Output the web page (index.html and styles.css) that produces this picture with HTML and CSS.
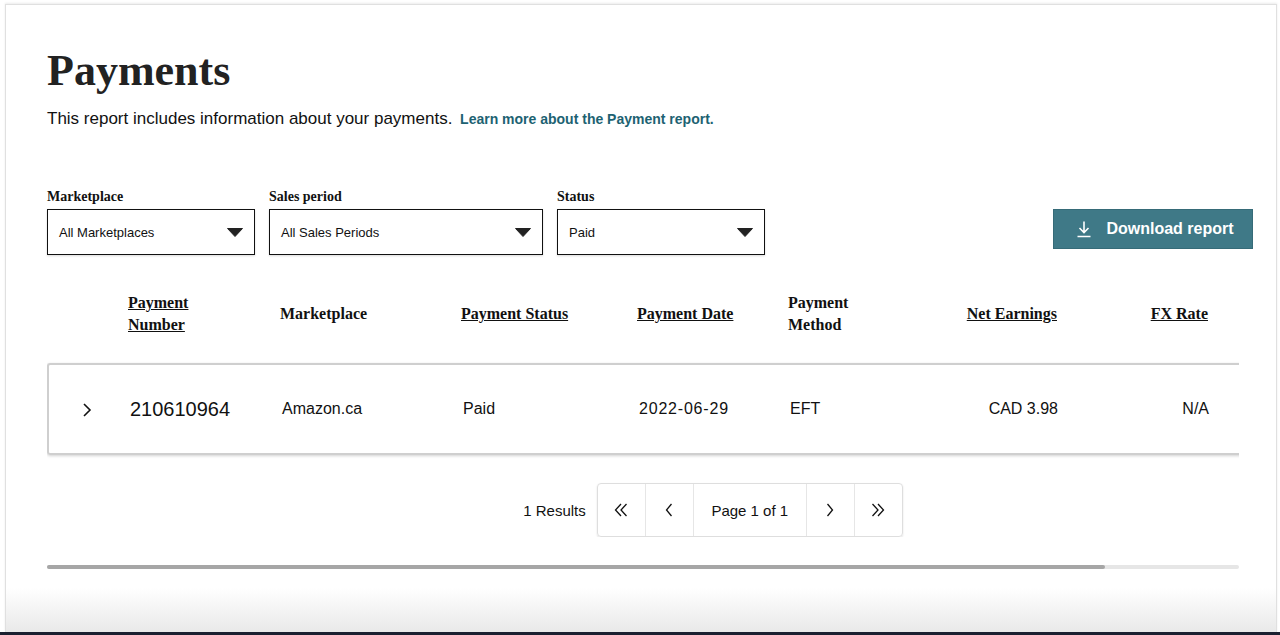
FILE: index.html
```html
<!DOCTYPE html>
<html lang="en">
<head>
    <meta charset="UTF-8">
    <meta name="viewport" content="width=device-width, initial-scale=1.0">
    <title>Payments</title>
    <link rel="stylesheet" href="styles.css">
</head>
<body>

    <div class="page">
        <h1>Payments</h1>
        <p class="intro">This report includes information about your payments. <a href="#" class="learn-link">Learn more about the Payment report.</a></p>

        <!-- Filters -->
        <div class="filter-row">
            <div class="filter">
                <label>Marketplace</label>
                <div class="select select-small">
                    <span>All Marketplaces</span>
                    <svg class="caret" width="16" height="9" viewBox="0 0 16 9"><polygon points="0.5,0.5 15.5,0.5 8,8.5" fill="#222" stroke="#222" stroke-linejoin="round"/></svg>
                </div>
            </div>
            <div class="filter">
                <label>Sales period</label>
                <div class="select select-wide">
                    <span>All Sales Periods</span>
                    <svg class="caret" width="16" height="9" viewBox="0 0 16 9"><polygon points="0.5,0.5 15.5,0.5 8,8.5" fill="#222" stroke="#222" stroke-linejoin="round"/></svg>
                </div>
            </div>
            <div class="filter">
                <label>Status</label>
                <div class="select select-small">
                    <span>Paid</span>
                    <svg class="caret" width="16" height="9" viewBox="0 0 16 9"><polygon points="0.5,0.5 15.5,0.5 8,8.5" fill="#222" stroke="#222" stroke-linejoin="round"/></svg>
                </div>
            </div>
            <button class="download-btn">
                <svg width="16" height="18" viewBox="0 0 16 18"><path d="M8 1.5v11 M3.5 8l4.5 4.5 4.5-4.5 M1.5 16.5h13" fill="none" stroke="#fff" stroke-width="1.6"/></svg>
                Download report
            </button>
        </div>

        <!-- Payments table -->
        <div class="table-scroll">
            <div class="table-inner">
                <div class="grid head-row">
                    <div></div>
                    <div><a href="#" class="sort narrow">Payment Number</a></div>
                    <div>Marketplace</div>
                    <div><a href="#" class="sort">Payment Status</a></div>
                    <div><a href="#" class="sort">Payment Date</a></div>
                    <div><span class="narrow">Payment Method</span></div>
                    <div class="num"><a href="#" class="sort">Net Earnings</a></div>
                    <div class="num"><a href="#" class="sort">FX Rate</a></div>
                    <div></div>
                </div>

                <div class="grid data-row">
                    <div class="expand">
                        <svg width="10" height="16" viewBox="0 0 10 16"><path d="M2 2l6 6-6 6" fill="none" stroke="#111" stroke-width="1.6"/></svg>
                    </div>
                    <div class="pay-number">210610964</div>
                    <div>Amazon.ca</div>
                    <div>Paid</div>
                    <div class="date">2022-06-29</div>
                    <div>EFT</div>
                    <div class="num">CAD 3.98</div>
                    <div class="num">N/A</div>
                    <div></div>
                </div>

                <div class="pager-row">
                    <span class="results">1 Results</span>
                    <div class="pager">
                        <div class="pager-cell pager-icon">
                            <svg width="14" height="14" viewBox="0 0 14 14"><path d="M7 1L1.5 7 7 13 M12.5 1L7 7l5.5 6" fill="none" stroke="#111" stroke-width="1.3"/></svg>
                        </div>
                        <div class="pager-cell pager-icon">
                            <svg width="8" height="14" viewBox="0 0 8 14"><path d="M6.5 1L1.5 7l5 6" fill="none" stroke="#111" stroke-width="1.3"/></svg>
                        </div>
                        <div class="pager-cell pager-label">Page 1 of 1</div>
                        <div class="pager-cell pager-icon">
                            <svg width="8" height="14" viewBox="0 0 8 14"><path d="M1.5 1l5 6-5 6" fill="none" stroke="#111" stroke-width="1.3"/></svg>
                        </div>
                        <div class="pager-cell pager-icon">
                            <svg width="14" height="14" viewBox="0 0 14 14"><path d="M1.5 1L7 7l-5.5 6 M7 1l5.5 6L7 13" fill="none" stroke="#111" stroke-width="1.3"/></svg>
                        </div>
                    </div>
                </div>
            </div>
        </div>

        <div class="scrollbar">
            <div class="scrollbar-thumb" style="width: 88.8%"></div>
        </div>
    </div>
    <div class="footer-bar"></div>

</body>
</html>
```

FILE: styles.css
```css
body {
    font-family: "Liberation Sans", Arial, sans-serif;
    color: #111;
    background-color: #fff;
    margin: 0;
    height: 635px;
    overflow: hidden;
}
.page {
    height: 628px;
    margin: 4px 3px 0 5px;
    padding: 40px 24px 0 41px;
    box-sizing: border-box;
    border: 1px solid #e0e0e0;
    border-bottom: none;
    box-shadow: 0 -1px 2px rgba(0, 0, 0, 0.08);
    background: linear-gradient(to bottom, #fff 0%, #fff 93%, #e9e9e9 100%);
}
h1 {
    font-family: "Liberation Serif", "Times New Roman", serif;
    font-size: 44px;
    line-height: 52px;
    font-weight: bold;
    color: #222;
    margin: 0;
}
.intro {
    font-size: 17px;
    line-height: 20px;
    margin: 12px 0 0 0;
}
.learn-link {
    font-size: 14px;
    font-weight: bold;
    color: #1d6272;
    text-decoration: none;
    margin-left: 3px;
}

/* filters */
.filter-row {
    display: flex;
    align-items: flex-end;
    gap: 14px;
    margin-top: 59px;
}
.filter label {
    display: block;
    font-family: "Liberation Serif", "Times New Roman", serif;
    font-size: 14px;
    line-height: 18px;
    font-weight: bold;
    margin-bottom: 3px;
}
.select {
    display: flex;
    align-items: center;
    justify-content: space-between;
    height: 46px;
    padding: 0 11px 0 11px;
    box-sizing: border-box;
    border: 1px solid #111;
    box-shadow: 0 1px 2px rgba(0, 0, 0, 0.15);
    font-size: 13px;
    background-color: #fff;
}
.select-small {
    width: 208px;
}
.select-wide {
    width: 274px;
}
.caret {
    margin-top: 1px;
}
.download-btn {
    margin-left: auto;
    margin-bottom: 6px;
    margin-right: -1px;
    width: 200px;
    height: 40px;
    display: flex;
    align-items: center;
    justify-content: center;
    gap: 14px;
    background-color: #3f7987;
    color: #fff;
    border: 1px solid #366b78;
    font-family: "Liberation Sans", Arial, sans-serif;
    font-size: 16px;
    font-weight: bold;
    cursor: pointer;
    padding: 0 0 0 4px;
}

/* table */
.table-scroll {
    width: 1192px;
    overflow: hidden;
    margin-top: 34px;
}
.table-inner {
    width: 1342px;
}
.grid {
    display: grid;
    grid-template-columns: 81px 152px 181px 176px 151px 151px 118px 151px 1fr;
    align-items: center;
}
.head-row {
    height: 50px;
    font-family: "Liberation Serif", "Times New Roman", serif;
    font-size: 16px;
    line-height: 22px;
    font-weight: bold;
}
.sort {
    color: #111;
    text-decoration: underline;
}
.narrow {
    display: inline-block;
    max-width: 80px;
}
.num {
    text-align: right;
}
.data-row {
    margin-top: 24px;
    height: 92px;
    box-sizing: border-box;
    border: 2px solid #cfcfcf;
    border-right: none;
    border-radius: 3px 0 0 3px;
    box-shadow: 0 1px 3px rgba(0, 0, 0, 0.18);
    font-size: 16px;
}
.data-row .num {
    padding-right: 1px;
}
.expand {
    display: flex;
    justify-content: flex-end;
    padding-right: 38px;
    padding-top: 2px;
}
.pay-number {
    font-size: 20px;
}
.date {
    letter-spacing: 0.8px;
}

/* pagination */
.pager-row {
    display: flex;
    align-items: center;
    justify-content: center;
    gap: 11px;
    margin-top: 28px;
    padding-right: 10px;
}
.results {
    font-size: 15px;
}
.pager {
    display: flex;
    height: 52px;
    border: 1px solid #dedede;
    border-radius: 4px;
    box-shadow: 0 1px 2px rgba(0, 0, 0, 0.12);
}
.pager-cell {
    display: flex;
    align-items: center;
    justify-content: center;
    border-left: 1px solid #e6e6e6;
}
.pager-cell:first-child {
    border-left: none;
}
.pager-icon {
    width: 47px;
}
.pager-label {
    width: 112px;
    font-size: 15px;
}

/* fake horizontal scrollbar */
.scrollbar {
    width: 1192px;
    height: 4px;
    margin-top: 28px;
    background-color: #e6e6e6;
    border-radius: 2px;
}
.scrollbar-thumb {
    height: 4px;
    background-color: #a6a6a6;
    border-radius: 2px;
}
.footer-bar {
    height: 3px;
    background-color: #1b2030;
}
```
